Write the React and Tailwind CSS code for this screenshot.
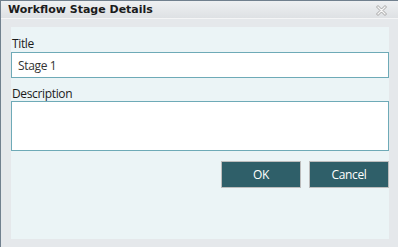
export default function App() {
  return (
    <div className="w-[399px] h-[249px] bg-white">
      <div className="w-[398px] h-[247px] flex flex-col border-l border-t border-[#71808e] bg-[#e5e8eb]">
        {/* Title bar */}
        <div className="h-[17px] shrink-0 flex items-center justify-between pl-[7px] pr-[11px] bg-gradient-to-b from-[#eef0f2] to-[#dee1e4]">
          <span className="text-[11px] font-bold text-[#1b1b1b] leading-none" style={{ fontFamily: '"DejaVu Sans", Verdana, sans-serif' }}>
            Workflow Stage Details
          </span>
          <svg width="11" height="11" viewBox="0 0 11 11" className="mt-px">
            <path
              d="M0.5 2 L2 0.5 L5.5 4 L9 0.5 L10.5 2 L7 5.5 L10.5 9 L9 10.5 L5.5 7 L2 10.5 L0.5 9 L4 5.5 Z"
              fill="#f7f7f7"
              stroke="#a3a3a3"
              strokeWidth="1"
              strokeLinejoin="round"
            />
          </svg>
        </div>
        <div className="h-px shrink-0 bg-[#f4f5f6]" />

        {/* Body */}
        <div className="flex-1 pl-[10px] pr-[9px] pt-[8px] pb-[8px]">
          <div
            className="h-full bg-[#ebf4f6] pt-[9px] flex flex-col text-[12px] tracking-[-0.35px] text-[#1b1b1b]"
            style={{ fontFamily: '"Open Sans", "Liberation Sans", sans-serif' }}
          >
            <label className="leading-[15px] px-px">Title</label>
            <input
              defaultValue="Stage 1"
              className="mt-px h-[26px] w-full bg-white border border-[#6eaab7] pl-[6px] text-[12px] text-[#333] outline-none"
            />
            <label className="mt-[8px] leading-[15px] px-px">Description</label>
            <textarea className="h-[50px] w-full bg-white border border-[#6eaab7] resize-none outline-none" />
            <div className="mt-[10px] flex justify-end gap-[8px]">
              <button className="w-[80px] h-[27px] bg-[#2f5f69] border border-[#bdbdbd] text-white text-[12px] font-medium">
                OK
              </button>
              <button className="w-[80px] h-[27px] bg-[#2f5f69] border border-[#bdbdbd] text-white text-[12px] font-medium">
                Cancel
              </button>
            </div>
          </div>
        </div>
      </div>
    </div>
  )
}
